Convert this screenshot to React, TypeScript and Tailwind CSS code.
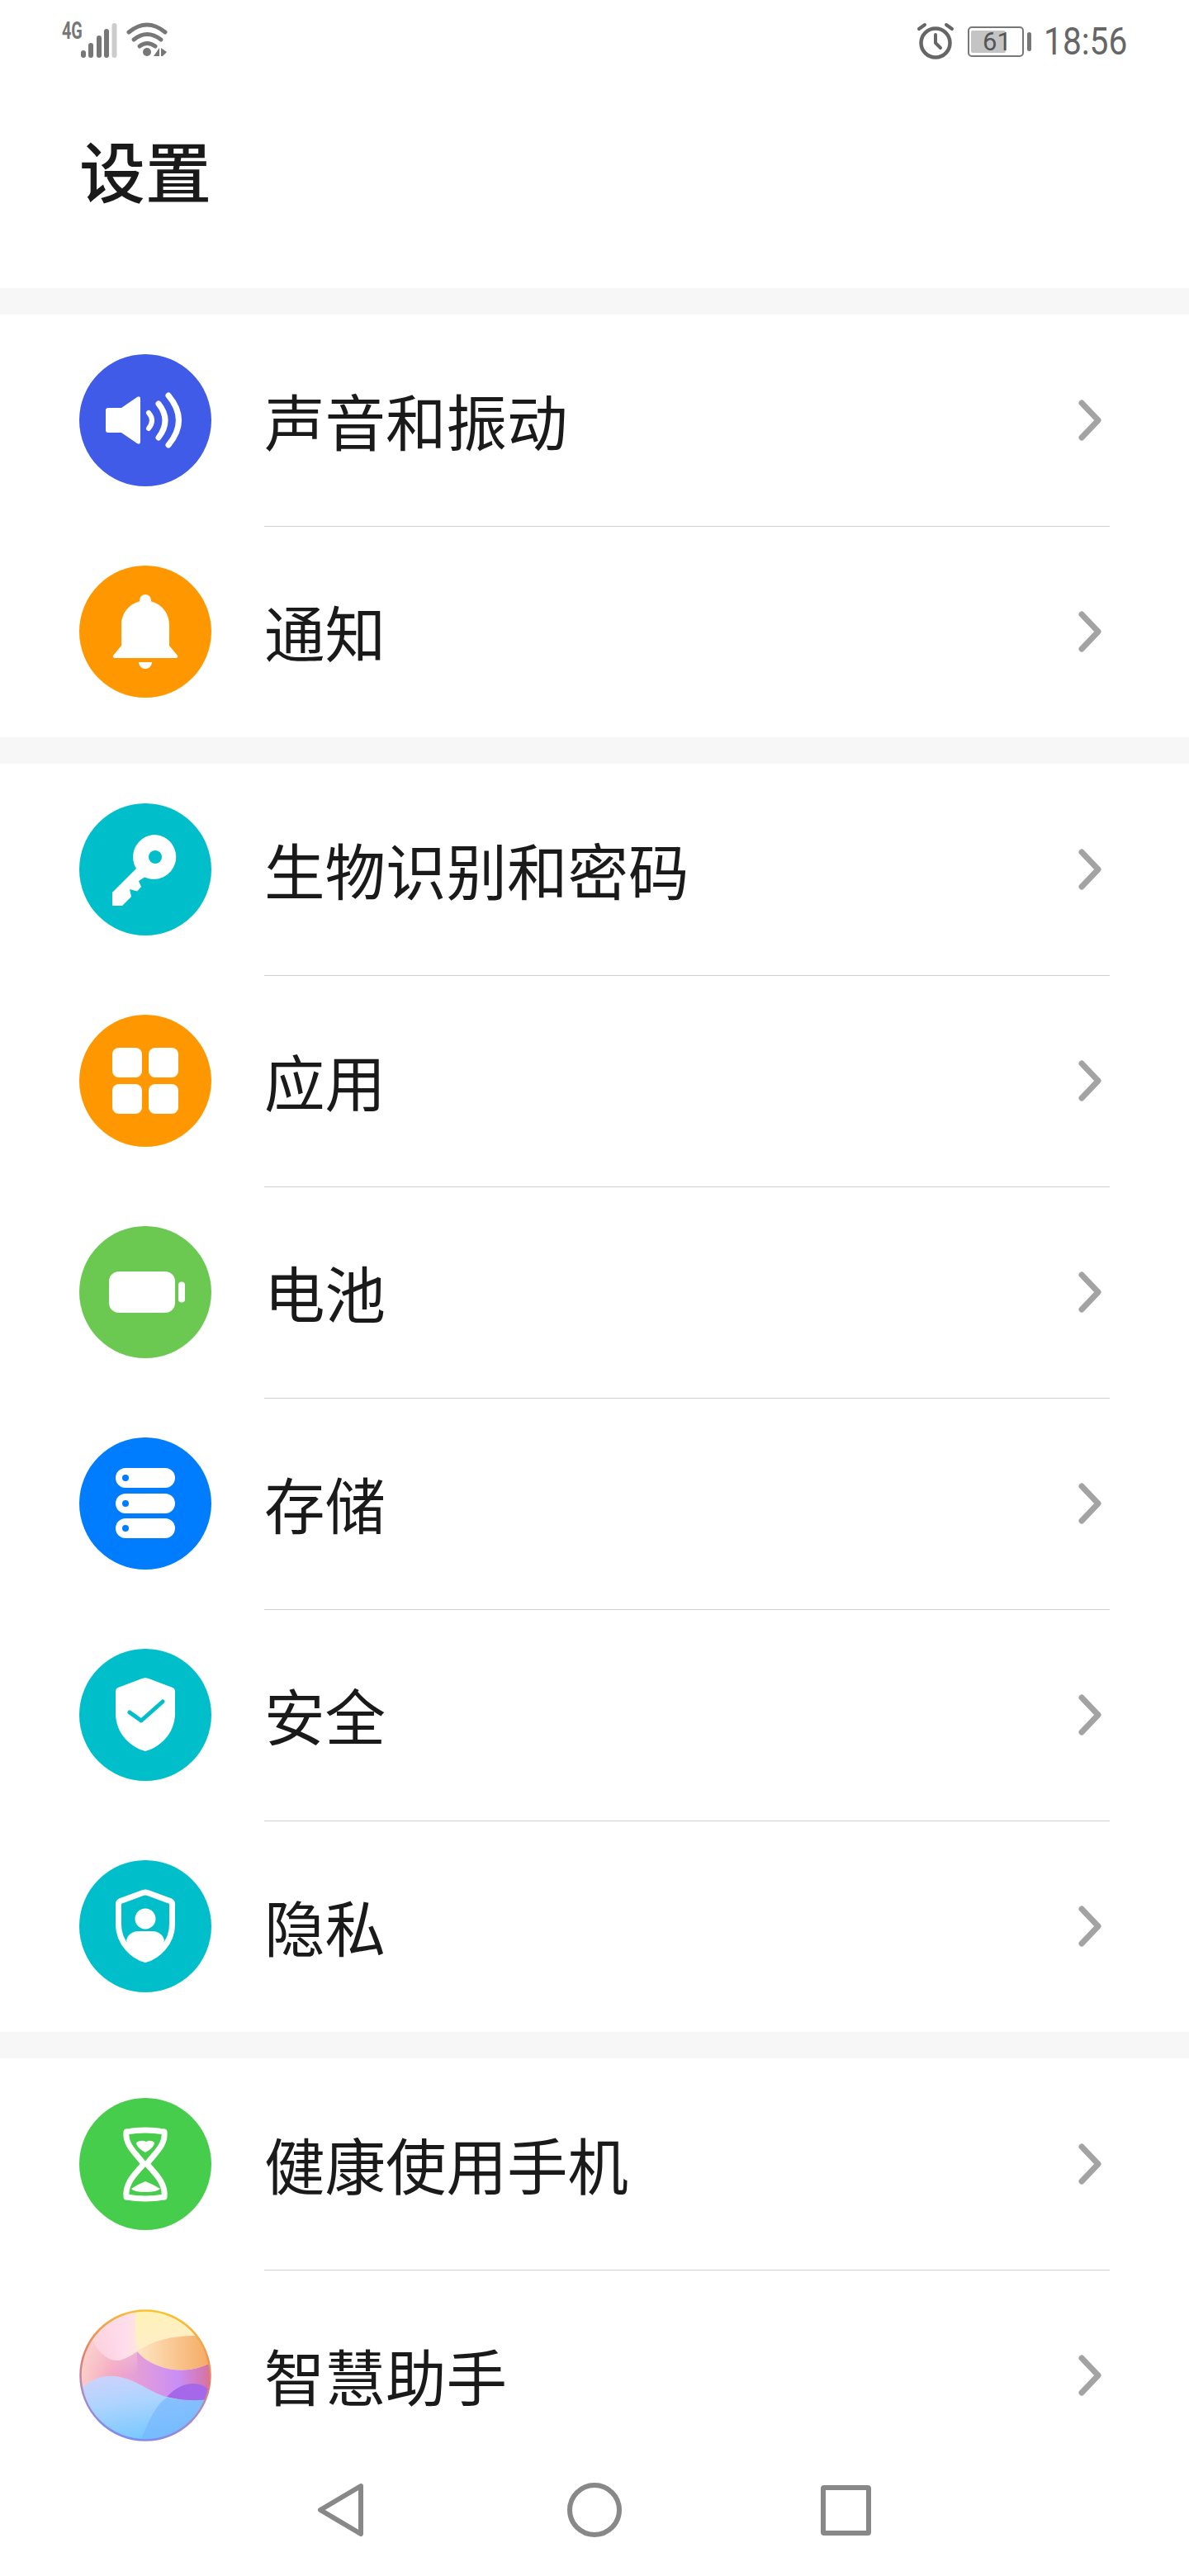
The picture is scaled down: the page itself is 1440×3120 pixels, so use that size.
import { ReactNode } from "react";

function IconSvg({ children }: { children: ReactNode }) {
  return (
    <svg viewBox="0 0 160 160" className="block w-full h-full">
      {children}
    </svg>
  );
}

const SoundIcon = () => (
  <IconSvg>
    <path fill="#fff" d="M35 65H51L70 52Q74 50 74 54V106Q74 110 70 108L51 95H35Q32 95 32 92V68Q32 65 35 65Z" />
    <g fill="none" stroke="#fff" strokeLinecap="round">
      <path strokeWidth="6" d="M84 71Q92 80 84 90" />
      <path strokeWidth="7" d="M96 60Q112 80 96 101" />
      <path strokeWidth="7" d="M108 50Q133 80 108 110" />
    </g>
  </IconSvg>
);

const BellIcon = () => (
  <IconSvg>
    <circle cx="80" cy="42" r="7" fill="#fff" />
    <path fill="#fff" d="M51 97V72C51 56 62 46 74 43H86C98 46 109 56 109 72V97L119 109Q120 112 117 112H43Q40 112 41 109Z" />
    <path fill="#fff" d="M72 117H88A8 8 0 0 1 72 117Z" />
  </IconSvg>
);

const KeyIcon = () => (
  <IconSvg>
    <path
      fill="#fff"
      fillRule="evenodd"
      d="M92 38A27 27 0 1 1 79 89.5L72 94L75 101L70 106.5L61 104L63 113L52 124H40V108L69 79A27 27 0 0 1 92 38ZM92 57A8 8 0 1 0 92 73A8 8 0 1 0 92 57Z"
    />
  </IconSvg>
);

const AppsIcon = () => (
  <IconSvg>
    <rect x="40" y="40" width="36" height="36" rx="8" fill="#fff" />
    <rect x="84" y="40" width="36" height="36" rx="8" fill="#fff" />
    <rect x="40" y="84" width="36" height="36" rx="8" fill="#fff" />
    <rect x="84" y="84" width="36" height="36" rx="8" fill="#fff" />
  </IconSvg>
);

const BatteryIcon = () => (
  <IconSvg>
    <rect x="36" y="55" width="80" height="50" rx="12" fill="#fff" />
    <rect x="120" y="67.5" width="8" height="25" rx="4" fill="#fff" />
  </IconSvg>
);

const StorageIcon = () => (
  <IconSvg>
    {[37, 68, 98].map((y) => (
      <g key={y}>
        <rect x="44" y={y} width="72" height="24" rx="12" fill="#fff" />
        <circle cx="56" cy={y + 12} r="4" fill="#007dff" />
      </g>
    ))}
  </IconSvg>
);

const shield = "M76 36Q80 34.5 84 36L113 47Q116 48 116 52V78C116 104 96 120 80 124C64 120 44 104 44 78V52Q44 48 47 47Z";

const SecurityIcon = () => (
  <IconSvg>
    <path fill="#fff" d={shield} />
    <path d="M61 77L75 87L101 64" fill="none" stroke="#00bfca" strokeWidth="5" strokeLinecap="round" strokeLinejoin="round" />
  </IconSvg>
);

const PrivacyIcon = () => (
  <IconSvg>
    <path d="M77 39.5Q80 38.5 83 39.5L110 49.5Q112.5 50.5 112.5 53V78C112.5 101 94 116.500 80 120.500C66 116.500 47.500 101 47.500 78V53Q47.500 50.500 50 49.500Z" fill="none" stroke="#fff" strokeWidth="7" />
    <circle cx="80" cy="71" r="12.500" fill="#fff" />
    <path fill="#fff" d="M57 97C59 90 64 86 72 86H88C96 86 101 90 103 97C100 110 90 117 80 121C70 117 60 110 57 97Z" />
  </IconSvg>
);

const HealthIcon = () => (
  <IconSvg>
    <path
      d="M57 41Q80 37 103 41C105 58 90 68 82 80C90 90 105 102 103 120Q80 124 57 120C55 102 70 90 78 80C70 68 55 58 57 41Z"
      fill="none"
      stroke="#fff"
      strokeWidth="7"
      strokeLinejoin="round"
    />
    <path fill="#fff" d="M69 54Q75 50 81 53Q87 50 91 54Q91 60 80 66Q69 60 69 54Z" />
    <path fill="#fff" d="M63 110Q72 104 80 101Q88 104 98 110Q94 114 80 114Q66 114 63 110Z" />
  </IconSvg>
);

const AssistantIcon = () => (
  <IconSvg>
    <defs>
      <clipPath id="ballClip">
        <circle cx="80" cy="80" r="79" />
      </clipPath>
      <linearGradient id="ballBase" x1="0" y1="0.5" x2="1" y2="0.5">
        <stop offset="0" stopColor="#fbd0c8" />
        <stop offset="0.25" stopColor="#f4a8c4" />
        <stop offset="0.75" stopColor="#c98ef6" />
        <stop offset="1" stopColor="#d8709a" />
      </linearGradient>
      <linearGradient id="ballTop" x1="0" y1="0" x2="0" y2="1">
        <stop offset="0" stopColor="#fbdcd4" />
        <stop offset="1" stopColor="#fbdcd4" stopOpacity="0" />
      </linearGradient>
      <linearGradient id="ballPink" x1="0" y1="0.5" x2="1" y2="0.5">
        <stop offset="0" stopColor="#ffdcec" stopOpacity="0.4" />
        <stop offset="0.7" stopColor="#ffdcec" />
        <stop offset="1" stopColor="#ffe6dc" />
      </linearGradient>
      <linearGradient id="ballYellow" x1="0.4" y1="0" x2="0.6" y2="1">
        <stop offset="0" stopColor="#fff2b8" />
        <stop offset="0.6" stopColor="#ffeec8" />
        <stop offset="1" stopColor="#fde0b8" />
      </linearGradient>
      <linearGradient id="ballOrange" x1="0" y1="0.5" x2="1" y2="0.5">
        <stop offset="0" stopColor="#fde6c4" />
        <stop offset="1" stopColor="#f6a860" />
      </linearGradient>
      <linearGradient id="ballBlue" x1="0.05" y1="0.1" x2="0.35" y2="1">
        <stop offset="0" stopColor="#c9d2fb" />
        <stop offset="0.4" stopColor="#aed4ff" />
        <stop offset="1" stopColor="#78c8ff" />
      </linearGradient>
      <linearGradient id="ballRing" x1="0.6" y1="0" x2="0.4" y2="1">
        <stop offset="0" stopColor="#f8c52f" />
        <stop offset="0.45" stopColor="#e77a6c" />
        <stop offset="0.7" stopColor="#b08ac0" />
        <stop offset="1" stopColor="#7f8bf0" />
      </linearGradient>
    </defs>
    <g clipPath="url(#ballClip)">
      <rect width="160" height="160" fill="url(#ballBase)" />
      <path fill="url(#ballTop)" d="M0 0H70V80H0Z" />
      <path fill="url(#ballPink)" d="M10 0H72V50C60 58 52 62 46 62C32 62 20 48 16 36Z" />
      <path fill="url(#ballYellow)" d="M68 0H160V64C140 76 115 76 95 68C78 60 70 50 69 38Z" />
      <path fill="url(#ballOrange)" d="M70 51C88 38 112 32 140 32L160 40V64C140 76 115 76 95 68C84 64 76 58 70 51Z" />
      <path fill="#a468e8" d="M106 106C122 88 146 84 160 100V112H140Q120 112 106 106Z" />
      <path fill="url(#ballBlue)" d="M0 98C14 84 30 78 50 82C76 88 88 104 115 108Q135 112 160 109V160H0Z" />
      <path fill="#74b6ff" opacity="0.65" d="M74 160C84 136 92 116 106 107Q125 112 160 109V160Z" />
    </g>
    <circle cx="80" cy="80" r="78.500" fill="none" stroke="url(#ballRing)" strokeWidth="2.500" />
  </IconSvg>
);

interface Item {
  label: string;
  color: string;
  icon: ReactNode;
}

const sections: Item[][] = [
  [
    { label: "声音和振动", color: "bg-[#3f5be8]", icon: <SoundIcon /> },
    { label: "通知", color: "bg-[#ff9800]", icon: <BellIcon /> },
  ],
  [
    { label: "生物识别和密码", color: "bg-[#00bfca]", icon: <KeyIcon /> },
    { label: "应用", color: "bg-[#ff9800]", icon: <AppsIcon /> },
    { label: "电池", color: "bg-[#6bc952]", icon: <BatteryIcon /> },
    { label: "存储", color: "bg-[#007dff]", icon: <StorageIcon /> },
    { label: "安全", color: "bg-[#00bfca]", icon: <SecurityIcon /> },
    { label: "隐私", color: "bg-[#00bfca]", icon: <PrivacyIcon /> },
  ],
  [
    { label: "健康使用手机", color: "bg-[#47cd4c]", icon: <HealthIcon /> },
    { label: "智慧助手", color: "", icon: <AssistantIcon /> },
  ],
];

function Row({ item, last }: { item: Item; last: boolean }) {
  return (
    <div className="flex items-center h-[256px] pl-[96px] pr-[96px]">
      <div className={`w-[160px] h-[160px] rounded-full shrink-0 ${item.color}`}>{item.icon}</div>
      <div className={`flex flex-1 items-center justify-between h-[258px] ml-[64px] ${last ? "" : "border-b border-[#cfcfcf]"}`}>
        <span className="text-[73.5px] leading-none text-[#1a1a1a]">{item.label}</span>
        <svg viewBox="0 0 28 50" className="w-[28px] h-[50px] mr-[10px] shrink-0">
          <path d="M4 4L24 25L4 46" fill="none" stroke="#a3a3a3" strokeWidth="7" strokeLinecap="round" strokeLinejoin="round" />
        </svg>
      </div>
    </div>
  );
}

function StatusBar() {
  return (
    <div className="flex items-center justify-between h-[100px] pl-[75px] pr-[76px] font-['Roboto',sans-serif] text-[#666]">
      <div className="relative w-[130px] h-[50px] mt-[-2px]">
        <span className="absolute left-0 top-[1px] text-[30px] leading-[24px] font-bold text-[#777] origin-left scale-x-[0.66]">4G</span>
        <svg viewBox="0 0 130 50" className="block w-[130px] h-[50px]">
          <g stroke="#777" strokeWidth="6" strokeLinecap="round">
            <path d="M26 40V43" />
            <path d="M35 31V43" />
            <path d="M45 22V43" />
            <path d="M54 14V43" />
            <path stroke="#ccc" d="M63.500 7V43" />
          </g>
          <g fill="none" stroke="#777" strokeWidth="5" strokeLinecap="round">
            <path d="M81 15Q103 -3 125 15" />
            <path d="M87 24Q103 11 120 24" />
            <path d="M94 32Q103 25 113 32" />
          </g>
          <circle cx="103" cy="39" r="5" fill="#777" />
          <path d="M111 44L118 34V44ZM120 34L127 39L122 44H120Z" fill="#777" />
        </svg>
      </div>
      <div className="flex items-center">
        <svg viewBox="0 0 48 48" className="w-[48px] h-[48px] mr-[15px]">
          <circle cx="24" cy="26" r="17.500" fill="none" stroke="#666" strokeWidth="4.500" />
          <path d="M24 16V26L30 32M4 9L11 4M44 9L37 4" fill="none" stroke="#666" strokeWidth="4" strokeLinecap="round" strokeLinejoin="round" />
        </svg>
        <div className="relative flex items-center justify-center w-[68px] h-[37px] rounded-[5px] border-2 border-[#777]">
          <div className="absolute left-[2px] top-[3px] bottom-[3px] w-[42px] rounded-[2px] bg-[#c4c4c4]" />
          <span className="relative text-[31px] leading-none text-[#555] ml-[3px]">61</span>
        </div>
        <div className="w-[5px] h-[23px] rounded-full bg-[#777] ml-[4px] mr-[15px]" />
        <span className="block w-[100px] text-[46px] leading-none whitespace-nowrap origin-left scale-x-[0.885]">18:56</span>
      </div>
    </div>
  );
}

function NavBar() {
  return (
    <div className="absolute left-0 right-0 bottom-0 h-[160px] bg-white flex items-center pl-[384px]">
      <svg viewBox="0 0 57 66" className="w-[57px] h-[66px]">
        <path d="M53 4L4 33L53 62Z" fill="none" stroke="#888" strokeWidth="6" strokeLinejoin="round" />
      </svg>
      <div className="w-[66px] h-[66px] rounded-full border-[6px] border-[#888] ml-[246px]" />
      <div className="w-[61px] h-[61px] rounded-[4px] border-[6px] border-[#888] ml-[241px]" />
    </div>
  );
}

function App() {
  return (
    <div className="relative h-[3120px] overflow-hidden bg-white font-['Noto_Sans_CJK_SC','Noto_Sans',sans-serif]">
      <StatusBar />
      <div className="h-[249px] pl-[96px] pt-[64px]">
        <h1 className="text-[80px] leading-none font-medium text-[#1a1a1a]">设置</h1>
      </div>
      {sections.map((section, i) => (
        <div key={i}>
          <div className="h-[32px] bg-[#f7f7f7]" />
          {section.map((item, j) => (
            <Row key={item.label} item={item} last={j === section.length - 1} />
          ))}
        </div>
      ))}
      <NavBar />
    </div>
  );
}

export default App;
